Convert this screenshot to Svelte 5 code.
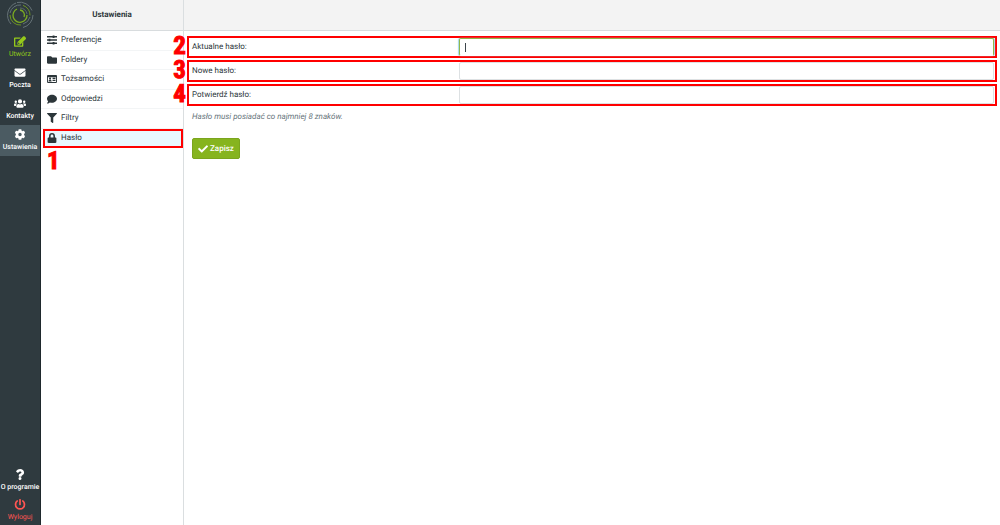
<script>
  const icons = {
    edit: { box: '0 0 576 512', d: 'M402 320l32-32c5-5 14-2 14 6v170c0 26-22 48-48 48H48c-27 0-48-22-48-48V112c0-27 21-48 48-48h266c8 0 11 8 6 14l-50 50H64v320h320V338zM559 143L296 406l-90 10c-26 3-49-19-46-46l10-90L433 17c23-23 60-23 83 0l43 43c23 23 23 60 0 83zM238 322l-28-28-8 66 14 14 66-8-14-14h-30z' },
    mail: { box: '0 0 512 512', d: 'M502 191c4-3 10 0 10 5v204c0 27-21 48-48 48H48c-27 0-48-21-48-48V196c0-5 6-8 10-5 22 17 52 40 155 114 21 16 57 48 91 48s71-33 91-48c103-74 133-97 155-114zM256 320c23 0 57-29 74-42 134-97 144-105 175-129 4-4 7-8 7-13v-24c0-27-21-48-48-48H48c-27 0-48 21-48 48v24c0 5 3 9 7 13 31 24 41 32 175 129 17 13 51 42 74 42z' },
    users: { box: '0 0 640 512', d: 'M96 224a64 64 0 1 0 0-128 64 64 0 0 0 0 128zm448 0a64 64 0 1 0 0-128 64 64 0 0 0 0 128zm32 32h-64c-18 0-34 7-45 18 40 22 69 62 75 110h66c18 0 32-14 32-32v-32c0-35-29-64-64-64zm-256 0a112 112 0 1 0 0-224 112 112 0 0 0 0 224zm77 32h-8a155 155 0 0 1-138 0h-8c-64 0-115 52-115 115v29c0 27 21 48 48 48h288c27 0 48-21 48-48v-29c0-63-51-115-115-115zm-224-14c-11-11-27-18-45-18H64c-35 0-64 29-64 64v32c0 18 14 32 32 32h66c6-48 35-88 75-110z' },
    cog: { box: '0 0 512 512', d: 'M487 316l-42-25c4-23 4-47 0-70l42-25c5-3 8-9 6-14-11-36-30-68-55-95-4-4-10-5-15-2l-42 24a190 190 0 0 0-61-35V26c0-6-4-11-9-12a248 248 0 0 0-110 0c-6 1-10 6-10 12v48c-22 8-43 20-61 35L88 85c-4-3-11-2-15 2-25 27-44 59-55 95-1 5 1 11 6 14l43 25c-5 23-5 47 0 70l-43 25c-5 3-7 9-6 14 11 36 30 68 55 95 4 4 11 5 15 2l42-24c18 15 39 27 61 35v48c0 6 4 11 10 12 36 8 73 8 110 0 5-1 9-6 9-12v-48c23-8 43-20 61-35l42 24c5 3 11 2 15-2 25-27 44-59 55-95 2-5-1-11-6-14zm-231 20a80 80 0 1 1 0-160 80 80 0 0 1 0 160z' },
    question: { box: '0 0 384 512', d: 'M203 0C117 0 61 35 17 97c-8 11-6 27 5 35l53 41c11 8 27 7 35-4 28-35 48-53 86-53 32 0 63 17 63 45 0 22-18 33-47 49-35 19-80 44-80 105v15c0 14 11 25 25 25h88c14 0 25-11 25-25v-6c0-42 112-44 112-162C382 70 292 0 203 0zm-2 373a70 70 0 1 0 0 139 70 70 0 0 0 0-139z' },
    power: { box: '0 0 512 512', d: 'M400 54c63 45 104 118 104 202a248 248 0 0 1-496 0c0-84 41-157 104-202 11-8 27-5 34 7l16 28c6 11 3 24-7 32a168 168 0 1 0 202 0c-10-8-13-21-7-32l16-28c7-12 23-15 34-7zM296 264V24c0-13-11-24-24-24h-32c-13 0-24 11-24 24v240c0 13 11 24 24 24h32c13 0 24-11 24-24z' },
    sliders: { box: '0 0 512 512', d: 'M0 56h288V24h96v32h128v72H384v24h-96v-24H0zM0 220h80v-32h96v32h336v72H176v32H80v-32H0zM0 384h288v-32h96v32h128v72H384v32h-96v-32H0z' },
    folder: { box: '0 0 512 512', d: 'M464 128H272l-64-64H48c-27 0-48 21-48 48v288c0 27 21 48 48 48h416c27 0 48-21 48-48V176c0-27-21-48-48-48z' },
    card: { box: '0 0 576 512', d: 'M528 32H48C21 32 0 53 0 80v352c0 27 21 48 48 48h480c27 0 48-21 48-48V80c0-27-21-48-48-48zM54 150h468v276H54zM176 176a62 62 0 1 0 0 124 62 62 0 0 0 0-124zM88 382c0-42 30-66 60-66h56c30 0 60 24 60 66v18H88zM320 190h168v62H320zM320 306h168v62H320z' },
    comment: { box: '0 0 512 512', d: 'M256 32C115 32 0 125 0 240c0 50 21 95 57 131-13 50-54 94-55 95-5 7-1 14 6 14 66 0 116-32 140-51 33 12 69 19 108 19 141 0 256-93 256-208S397 32 256 32z' },
    filter: { box: '0 0 512 512', d: 'M488 0H24C3 0-8 26 7 41l185 185v206c0 8 4 15 10 20l80 56c16 11 38 0 38-20V226L505 41c15-15 4-41-17-41z' },
    lock: { box: '0 0 448 512', d: 'M400 224h-24v-72a152 152 0 0 0-304 0v72H48c-27 0-48 21-48 48v192c0 27 21 48 48 48h352c27 0 48-21 48-48V272c0-27-21-48-48-48zm-104 0H152v-72a72 72 0 0 1 144 0z' },
    check: { box: '0 0 512 512', d: 'M174 439L8 273c-10-10-10-26 0-36l36-36c10-10 26-10 36 0l112 111L432 72c10-10 26-10 36 0l36 36c10 10 10 26 0 36L210 439c-10 10-26 10-36 0z' }
  };

  const tasks = [
    { label: 'Utwórz', icon: 'edit', kind: 'create' },
    { label: 'Poczta', icon: 'mail' },
    { label: 'Kontakty', icon: 'users' },
    { label: 'Ustawienia', icon: 'cog', kind: 'active' }
  ];
  const footer = [
    { label: 'O programie', icon: 'question' },
    { label: 'Wyloguj', icon: 'power', kind: 'logout' }
  ];
  const sections = [
    { label: 'Preferencje', icon: 'sliders' },
    { label: 'Foldery', icon: 'folder' },
    { label: 'Tożsamości', icon: 'card' },
    { label: 'Odpowiedzi', icon: 'comment' },
    { label: 'Filtry', icon: 'filter' },
    { label: 'Hasło', icon: 'lock', step: 1 }
  ];
  const fields = [
    { id: 'current', label: 'Aktualne hasło:', step: 2, focused: true },
    { id: 'new', label: 'Nowe hasło:', step: 3 },
    { id: 'confirm', label: 'Potwierdź hasło:', step: 4 }
  ];
</script>

{#snippet glyph(name)}
  <svg class="glyph" viewBox={icons[name].box} aria-hidden="true"><path fill-rule="evenodd" d={icons[name].d} /></svg>
{/snippet}

{#snippet task(item)}
  <a href="#{item.icon}" class="task {item.kind ?? ''}">
    {@render glyph(item.icon)}
    <span>{item.label}</span>
  </a>
{/snippet}

<div class="layout">
  <nav class="taskbar">
    <svg class="logo" viewBox="0 0 28 28" aria-hidden="true">
      <g fill="none" stroke-width="1">
        <path stroke="#657277" d="M10 2a13 13 0 0 0-5 21M11 1.500a13 13 0 0 1 15 8M27 14a13 13 0 0 1-10 12.500" />
        <path stroke="#6c9322" d="M17 4.400a10 10 0 0 1 7 10M4 14a10 10 0 0 0 11 10" />
        <path stroke="#637277" d="M4 12a10 10 0 0 1 11-8M24 16a10 10 0 0 1-7 7" />
        <path stroke="#7cab22" stroke-width="1.300" d="M11 8a7 7 0 1 0 10 6M14 9a5 5 0 0 1 4 7" />
        <path stroke="#5a6b66" d="M14 7a7 7 0 0 1 7 6" />
      </g>
    </svg>
    {#each tasks as item}{@render task(item)}{/each}
    <div class="spacer"></div>
    {#each footer as item}{@render task(item)}{/each}
  </nav>

  <aside class="sidebar">
    <h1 class="header">Ustawienia</h1>
    <ul class="sections">
      {#each sections as item}
        <li class:selected={item.step}>
          <a href="#{item.icon}">{@render glyph(item.icon)}{item.label}</a>
          {#if item.step}<b class="step below">{item.step}</b>{/if}
        </li>
      {/each}
    </ul>
  </aside>

  <main class="content">
    <div class="header"></div>
    <form onsubmit={(e) => e.preventDefault()}>
      {#each fields as field}
        <div class="field" class:focused={field.focused}>
          <b class="step">{field.step}</b>
          <label for={field.id}>{field.label}</label>
          <div class="control">
            <input id={field.id} type="password" />
            {#if field.focused}<i class="caret"></i>{/if}
          </div>
        </div>
      {/each}
      <p class="hint">Hasło musi posiadać co najmniej 8 znaków.</p>
      <button type="submit">{@render glyph('check')}Zapisz</button>
    </form>
  </main>
</div>

<style>
  :global(body) {
    margin: 0;
  }
  .layout {
    display: flex;
    min-height: 100vh;
    font: 8px/12px Roboto, sans-serif;
    text-rendering: geometricPrecision;
    color: #2c363a;
    background: #fff;
  }
  a {
    color: inherit;
    text-decoration: none;
  }
  .glyph {
    display: block;
    flex: none;
    width: 10px;
    height: 10px;
    fill: currentColor;
  }

  .taskbar {
    display: flex;
    flex-direction: column;
    flex: none;
    width: 41px;
    box-sizing: border-box;
    border-right: 1px solid #1f292d;
    background: #2f3a3f;
    color: #fff;
    font-size: 7px;
    font-weight: 500;
  }
  .logo {
    width: 28px;
    height: 28px;
    margin: 1px auto 3px;
  }
  .task {
    display: flex;
    flex-direction: column;
    align-items: center;
    justify-content: center;
    gap: 1px;
    height: 31px;
    white-space: nowrap;
  }
  .task .glyph {
    width: 12px;
    height: 11px;
  }
  .task.active {
    background: #4b5b62;
  }
  .task.create {
    color: #95c91b;
    font-weight: 400;
  }
  .task.logout {
    height: 29px;
    color: #ff5552;
    font-weight: 400;
  }
  .spacer {
    flex: 1;
  }

  .header {
    height: 30px;
    margin: 0;
    border-bottom: 1px solid #d8dcde;
    background: #f3f3f3;
    font-size: 8px;
    line-height: 30px;
    text-align: center;
  }
  .sidebar {
    flex: none;
    width: 143px;
    box-sizing: border-box;
    border-right: 1px solid #dadee0;
  }
  .sections {
    display: grid;
    grid-template-rows: repeat(6, 1fr);
    height: 117px;
    margin: 0;
    padding: 0;
    list-style: none;
  }
  .sections li {
    position: relative;
    box-sizing: border-box;
    padding: 0 6px;
    border-bottom: 1px solid #f3f5f6;
  }
  .sections li.selected {
    margin-left: 2px;
    padding: 0 2px;
    border: 2px solid #f00;
    background: #e9f7fe;
  }
  .sections a {
    display: flex;
    align-items: center;
    gap: 4px;
    height: 100%;
  }

  .step {
    position: absolute;
    top: -1px;
    right: 100%;
    margin-right: 3px;
    color: #f00;
    font: bold 25px/20px "Roboto Condensed", "Open Sans Condensed", "Noto Sans Condensed", Roboto, sans-serif;
    -webkit-text-stroke: 1px #f00;
  }
  .step.below {
    top: 21px;
    right: auto;
    left: 2px;
  }

  .content {
    flex: 1;
    min-width: 0;
  }
  form {
    display: flex;
    flex-direction: column;
    align-items: flex-start;
    gap: 2px;
    padding: 5px 3px;
  }
  .field {
    position: relative;
    display: flex;
    align-items: stretch;
    align-self: stretch;
    box-sizing: border-box;
    height: 22px;
    padding-right: 1px;
    border: 2px solid #f00;
  }
  label {
    flex: none;
    width: 33.5%;
    box-sizing: border-box;
    padding-left: 3px;
    line-height: 17px;
  }
  .control {
    position: relative;
    display: flex;
    flex: 1;
  }
  input {
    flex: 1;
    min-width: 0;
    box-sizing: border-box;
    padding: 0 6px;
    border: 1px solid #dde1e3;
    border-radius: 2px;
    outline: none;
    background: #fff;
    font: inherit;
  }
  .focused input {
    border-color: #91b84a;
    border-bottom-color: #fff;
    box-shadow: -1px 0 1px #a5d8ea, 1px 0 1px #a5d8ea;
  }
  .caret {
    position: absolute;
    top: 5px;
    left: 6px;
    width: 1px;
    height: 9px;
    background: #3c464b;
  }
  .hint {
    margin: 3px 5px 13px;
    color: #66737a;
    font-style: italic;
  }
  button {
    display: flex;
    align-items: center;
    gap: 2px;
    height: 21px;
    margin-left: 5px;
    padding: 0 5px;
    border: 1px solid #7ba51d;
    border-radius: 2px;
    background: #86b41f;
    color: #fff;
    font: 500 8px/12px Roboto, sans-serif;
    text-rendering: geometricPrecision;
  }
</style>
